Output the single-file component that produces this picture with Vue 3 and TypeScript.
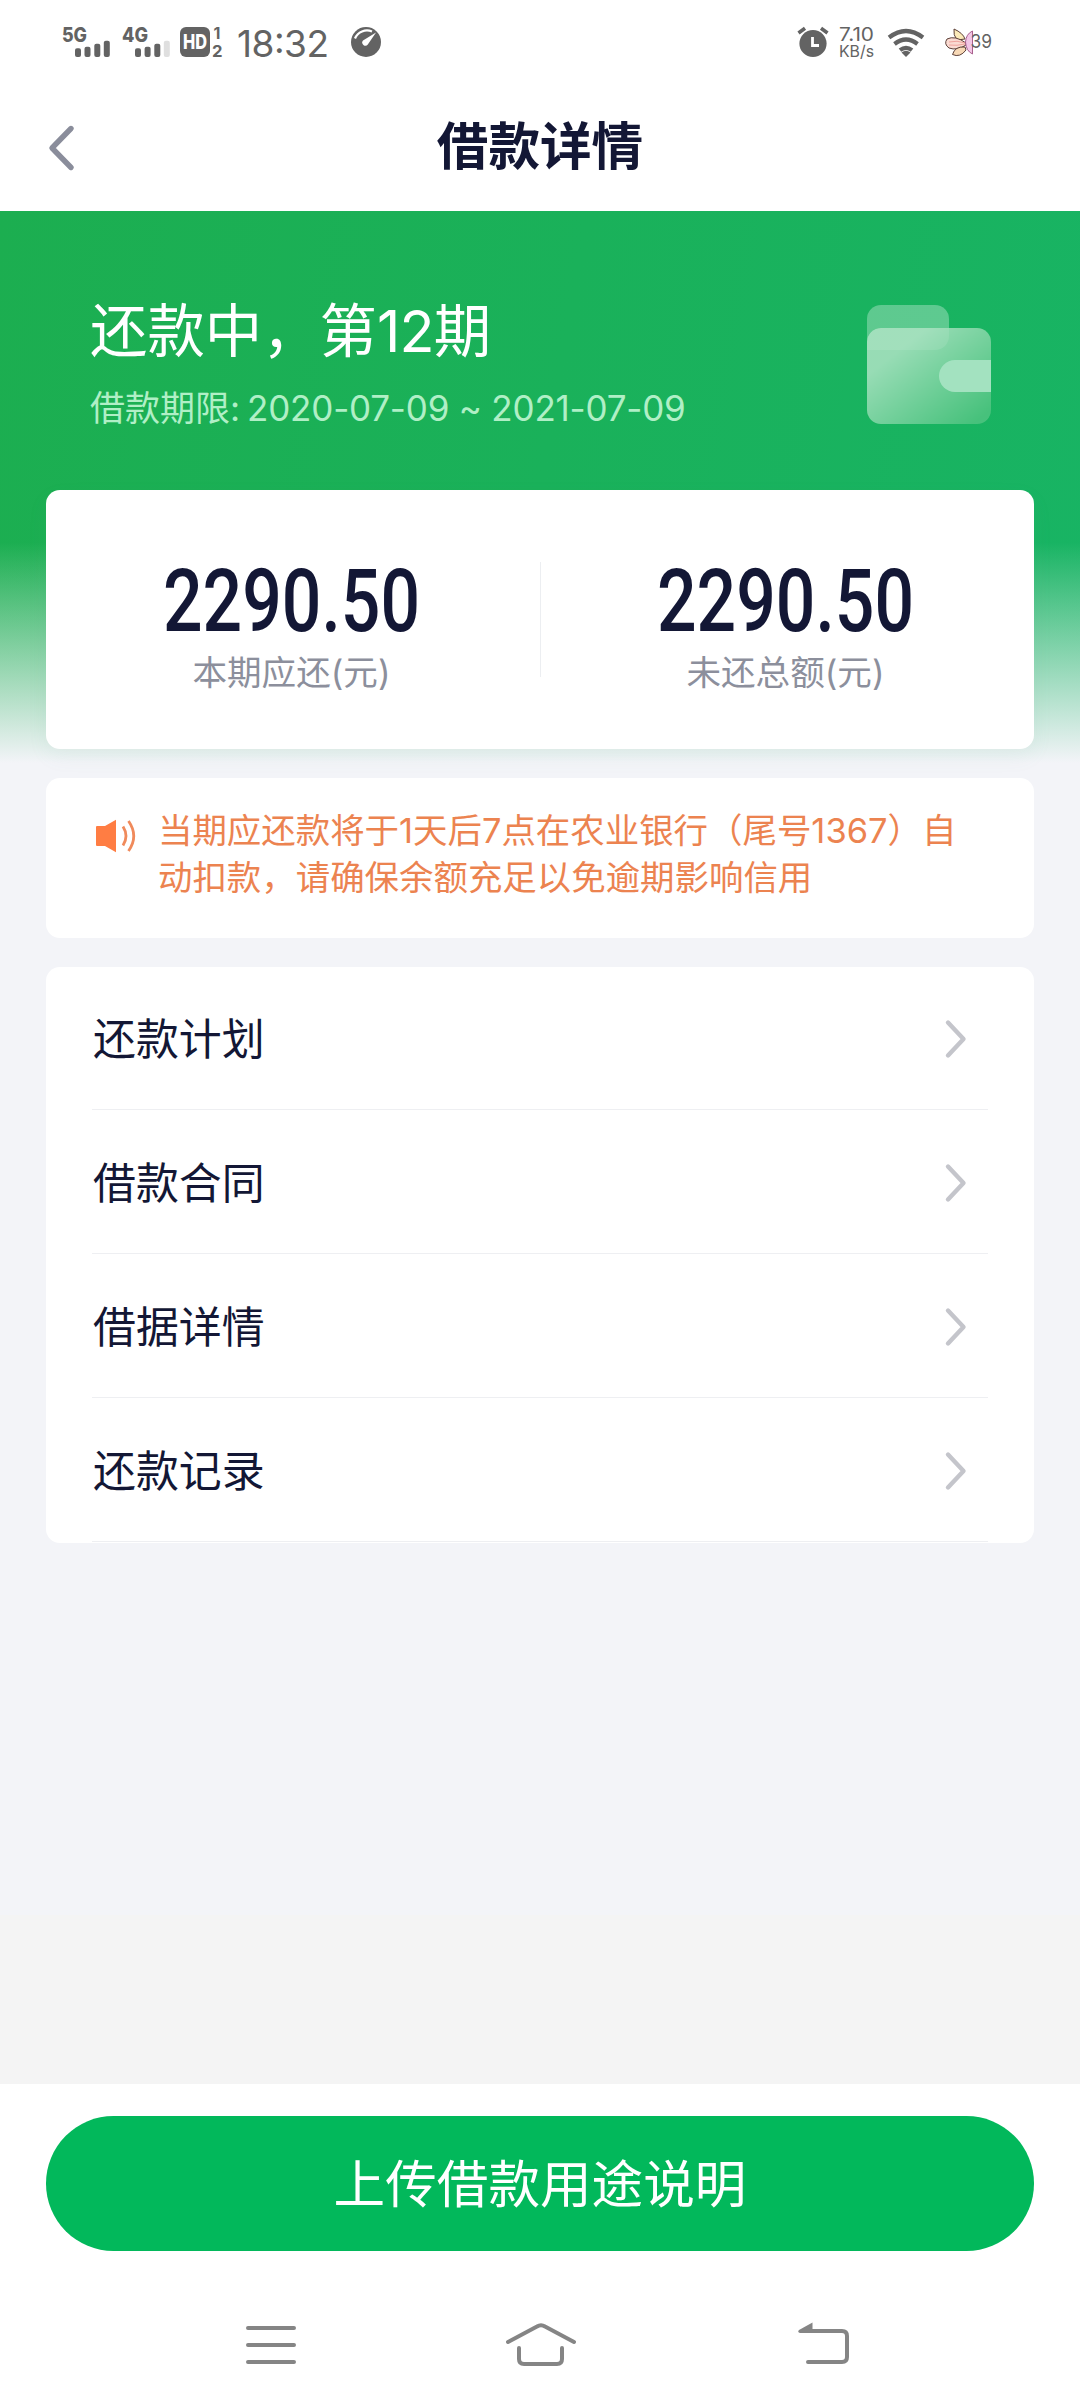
<script setup lang="ts">
interface Amount {
  value: string
  label: string
}

const amounts: Amount[] = [
  { value: '2290.50', label: '本期应还(元)' },
  { value: '2290.50', label: '未还总额(元)' },
]

const menu: string[] = ['还款计划', '借款合同', '借据详情', '还款记录']

const noticeLines: string[] = [
  '当期应还款将于1天后7点在农业银行（尾号1367）自',
  '动扣款，请确保余额充足以免逾期影响信用',
]
</script>

<template>
  <div class="screen">
    <header class="status">
      <svg class="status-left" width="400" height="75" viewBox="0 0 400 75">
        <g class="net">
          <text x="62" y="42" textLength="25" lengthAdjust="spacingAndGlyphs">5G</text>
          <text x="122" y="42" textLength="26" lengthAdjust="spacingAndGlyphs">4G</text>
        </g>
        <g fill="#636363">
          <rect x="75" y="48.3" width="6" height="8.7" rx="2" />
          <rect x="84.5" y="46.7" width="6" height="10.3" rx="2" />
          <rect x="94.3" y="43.7" width="6" height="13.3" rx="2" />
          <rect x="103.8" y="40.7" width="6" height="16.3" rx="2" />
          <rect x="135" y="48.3" width="6" height="8.7" rx="2" />
          <rect x="144.6" y="46.7" width="6" height="10.3" rx="2" />
          <rect x="154.3" y="43.7" width="6" height="13.3" rx="2" />
          <rect x="163.8" y="40.7" width="6" height="16.3" rx="2" fill="#dfdfdf" />
          <rect x="180" y="27" width="30" height="30" rx="6" />
          <circle cx="366" cy="42" r="15" />
        </g>
        <text class="hd" x="183" y="49.3" textLength="24" lengthAdjust="spacingAndGlyphs">HD</text>
        <text class="sim" x="213.5" y="39">1</text>
        <text class="sim" x="212" y="57" textLength="10.5" lengthAdjust="spacingAndGlyphs">2</text>
        <text class="time" x="237" y="57.2" textLength="92" lengthAdjust="spacing">18:32</text>
        <path d="M355 38.5A13 13 0 0 1 372 31.500" fill="none" stroke="#fff" stroke-width="2.200" />
        <path d="M376 32.500L367.800 44.500A3 3 0 0 1 363 40.500Z" fill="#fff" />
      </svg>
      <svg class="status-right" width="300" height="75" viewBox="780 0 300 75">
        <g fill="#636363">
          <circle cx="813" cy="43.500" r="13.600" />
          <path d="M798.500 33L805 28.200M827.500 33L821 28.200" stroke="#636363" stroke-width="3.600" />
          <path d="M812.500 37V45.500H819" fill="none" stroke="#fff" stroke-width="2.800" />
        </g>
        <text class="rate" x="839" y="40.800" textLength="35" lengthAdjust="spacingAndGlyphs">7.10</text>
        <text class="unit" x="839" y="56.600" textLength="35" lengthAdjust="spacingAndGlyphs">KB/s</text>
        <g fill="none" stroke="#636363" stroke-width="4.200">
          <path d="M889 37.500Q906 24.500 923 37.500" />
          <path d="M894.500 44Q906 35 917.500 44" />
          <path d="M900 50.200Q906 45.500 912 50.200" />
        </g>
        <path d="M901.500 52.500Q906 49 910.500 52.500L906 57Z" fill="#636363" />
        <g stroke="#5c4038" stroke-width="1">
          <path d="M965 39Q963 33 954 29Q953 35 957 40Z" fill="#fbeab8" />
          <path d="M966 43Q955 35 947 39Q943.500 44 949 48Q957 51 966 45Z" fill="#fadbd2" />
          <path d="M965 47Q955 46 952.500 54.500Q960 58 966 50Z" fill="#f8d9b6" />
          <path d="M972.500 31Q966 34 965.500 42Q966 51 972.500 54Z" fill="#f2c6e6" stroke="#a85f8d" />
        </g>
        <path d="M949 42Q957 40 965 43M949 45Q957 46 965 44" stroke="#ec9c96" stroke-width="0.900" fill="none" />
        <text class="battery" x="970.500" y="47.500" textLength="21.500" lengthAdjust="spacingAndGlyphs">39</text>
      </svg>
    </header>

    <nav class="navbar">
      <svg class="back" width="30" height="50" viewBox="0 0 30 50">
        <path d="M25 5.500L6 25L25 44.500" fill="none" stroke="#8a8d9b" stroke-width="5.400" stroke-linecap="round" stroke-linejoin="round" />
      </svg>
      <h1>借款详情</h1>
    </nav>

    <main class="body">
      <section class="hero">
        <div class="hero-text">
          <p class="state">还款中，第<span class="num">12</span>期</p>
          <p class="term">借款期限:<span class="dates">2020-07-09 ~ 2021-07-09</span></p>
        </div>
        <svg class="wallet" width="126" height="122" viewBox="866 304 126 122">
          <defs>
            <linearGradient id="walletFace" x1="0" y1="0.15" x2="0.85" y2="1">
              <stop offset="0" stop-color="#fff" stop-opacity="0.55" />
              <stop offset="0.2" stop-color="#fff" stop-opacity="0.55" />
              <stop offset="1" stop-color="#fff" stop-opacity="0.2" />
            </linearGradient>
          </defs>
          <path d="M867 342V319A14 14 0 0 1 881 305H935A14 14 0 0 1 949 319V336A14 14 0 0 1 935 350H881Q867 350 867 342Z" fill="#fff" fill-opacity="0.3" />
          <rect x="867" y="328" width="124" height="96" rx="14" fill="#19b25b" />
          <path d="M867 342A14 14 0 0 1 881 328H949V336A14 14 0 0 1 935 350H867Z" fill="#fff" fill-opacity="0.1" />
          <rect x="867" y="328" width="124" height="96" rx="14" fill="url(#walletFace)" />
          <path d="M991 360H955A16 16 0 0 0 955 392H991Z" fill="#a3e2c0" />
        </svg>
      </section>

      <section class="card amounts">
        <div v-for="(item, i) in amounts" :key="i" class="amount">
          <svg class="value" width="280" height="90" viewBox="-11 -8 280 90">
            <text x="0" y="67.500" textLength="257" lengthAdjust="spacingAndGlyphs">{{ item.value }}</text>
          </svg>
          <p class="label">{{ item.label }}</p>
        </div>
      </section>

      <section class="card notice">
        <svg width="42" height="36" viewBox="0 0 42 36">
          <path d="M2 8H10L21 1.800V34.200L10 28H2Q1 28 1 27V9Q1 8 2 8Z" fill="#ff7d43" />
          <path d="M28 8.500Q34 18 28 27.500M33.500 3Q44 18 33.500 33" fill="none" stroke="#f08a5b" stroke-width="2.800" />
        </svg>
        <div class="notice-text">
          <p v-for="line in noticeLines" :key="line">{{ line }}</p>
        </div>
      </section>

      <section class="card menu">
        <div v-for="name in menu" :key="name" class="row">
          <span>{{ name }}</span>
          <svg width="24" height="40" viewBox="0 0 24 40">
            <path d="M4 3.500L19.500 20L4 36.500" fill="none" stroke="#c4c5cb" stroke-width="4.400" stroke-linecap="round" stroke-linejoin="round" />
          </svg>
        </div>
      </section>
    </main>

    <footer class="footer">
      <button type="button">上传借款用途说明</button>
      <svg class="system" width="1080" height="60" viewBox="0 2314 1080 60">
        <g fill="none" stroke="#858585" stroke-width="4" stroke-linecap="round" stroke-linejoin="round">
          <path d="M248 2328H294M248 2345H294M248 2362H294" />
          <path d="M508 2342L537 2326.500Q541 2324 545 2326.500L574 2342" />
          <path d="M519 2348V2359Q519 2364 524 2364H557Q562 2364 562 2359V2348" />
          <path d="M812 2331H842Q847 2331 847 2336V2357Q847 2362 842 2362H808" />
        </g>
        <path d="M812.500 2322.500V2333H800Q797 2332 799 2330Z" fill="#858585" />
      </svg>
    </footer>
  </div>
</template>

<style>
body {
  margin: 0;
  background: #fff;
}
</style>

<style scoped>
.screen {
  width: 1080px;
  height: 2408px;
  display: flex;
  flex-direction: column;
  overflow: hidden;
  background: #fff;
  color: #131735;
  font-family: Inter, "Noto Sans CJK SC", sans-serif;
}

p,
h1 {
  margin: 0;
  font-weight: 400;
  white-space: nowrap;
}

svg {
  display: block;
  flex: none;
}

.status {
  height: 84px;
  display: flex;
  justify-content: space-between;
}

.status text {
  fill: #636363;
}

.net text {
  font: 800 20px Inter, sans-serif;
}

.status .hd {
  fill: #fff;
  font: 800 20px Inter, sans-serif;
}

.sim {
  font: 700 16px Inter, sans-serif;
}

.time {
  font: 400 37px Inter, sans-serif;
}

.rate {
  font: 400 18.5px Inter, sans-serif;
}

.unit {
  font: 400 16.5px Inter, sans-serif;
}

.battery {
  font: 400 19px Inter, sans-serif;
}

.navbar {
  height: 127px;
  display: grid;
  grid-template-columns: 80px 1fr 80px;
  align-items: center;
}

.back {
  margin-left: 46px;
}

h1 {
  padding-bottom: 3px;
  font-size: 51.6px;
  font-weight: 700;
  line-height: 76px;
  text-align: center;
}

.body {
  height: 1873px;
  box-sizing: border-box;
  padding: 0 46px;
  background:
    linear-gradient(180deg, rgba(243, 244, 248, 0) 60%, #f3f4f8 100%) 0 0 / 100% 552px no-repeat,
    linear-gradient(100deg, #1cae50 0%, #18b464 100%) 0 0 / 100% 552px no-repeat,
    linear-gradient(#f3f4f8, #f3f4f8) 0 0 / 100% 1704px no-repeat,
    #f4f4f4;
}

.hero {
  height: 279px;
  box-sizing: border-box;
  padding: 84px 42px 0 44px;
  display: flex;
  justify-content: space-between;
  color: #fff;
}

.wallet {
  margin-top: 9px;
}

.state {
  font-size: 57.4px;
  line-height: 72px;
}

.num {
  letter-spacing: -0.8px;
}

.term {
  margin-top: 19px;
  color: #b0efc6;
  font-size: 35px;
  line-height: 44px;
}

.dates {
  margin-left: 7px;
  letter-spacing: -0.2px;
}

.card {
  border-radius: 14px;
  background: #fff;
}

.amounts {
  height: 259px;
  display: grid;
  grid-template-columns: 1fr 1fr;
  box-shadow: 0 8px 20px rgba(100, 170, 140, 0.07);
}

.amount {
  position: relative;
  padding: 65px 3px 0 0;
  display: flex;
  flex-direction: column;
  align-items: center;
}

.amount + .amount::before {
  content: "";
  position: absolute;
  left: 0;
  top: 72px;
  width: 1px;
  height: 115px;
  background: #eceef1;
}

.value text {
  fill: #131735;
  font: 500 87px Roboto, sans-serif;
}

.label {
  margin-top: 5px;
  color: #8c8f9c;
  font-size: 34.6px;
  line-height: 44px;
}

.notice {
  margin-top: 29px;
  height: 160px;
  box-sizing: border-box;
  padding: 29px 48px 0 49px;
  display: flex;
  color: #ec8350;
}

.notice svg {
  margin-top: 11px;
}

.notice-text {
  margin-left: 21px;
  font-size: 34.45px;
  line-height: 47px;
}

.menu {
  margin-top: 29px;
  padding: 0 46px;
}

.row {
  height: 144px;
  box-sizing: border-box;
  padding: 0 20px 0 1px;
  display: flex;
  align-items: center;
  justify-content: space-between;
  background: linear-gradient(#eeeff2, #eeeff2) 0 142px / 100% 1px no-repeat;
  font-size: 42.9px;
}

.row span {
  padding-bottom: 6px;
}

.footer {
  height: 324px;
  background: #fff;
}

.footer button {
  display: block;
  width: 988px;
  height: 135px;
  margin: 32px auto 0;
  padding: 0 0 7px;
  border: 0;
  border-radius: 68px;
  background: #02b85b;
  color: #fff;
  font: 400 51.6px Inter, "Noto Sans CJK SC", sans-serif;
}

.system {
  margin-top: 63px;
}
</style>
